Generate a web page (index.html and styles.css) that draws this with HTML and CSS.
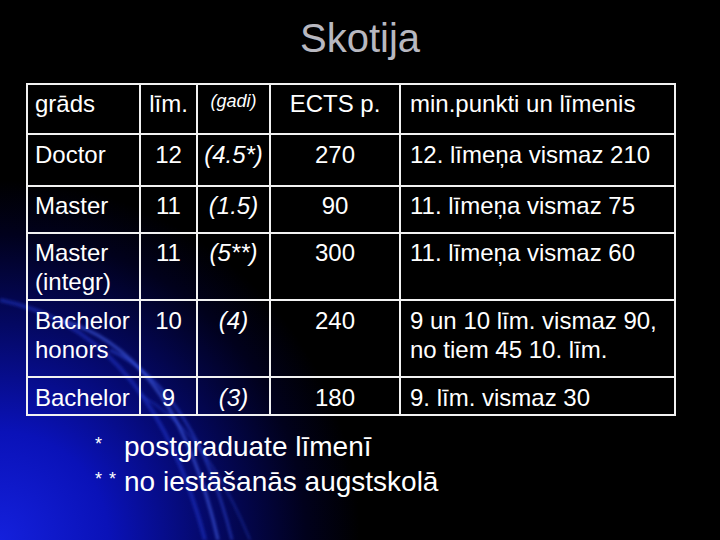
FILE: index.html
```html
<!DOCTYPE html>
<html lang="lv">
<head>
<meta charset="utf-8">
<title>Skotija</title>
<link rel="stylesheet" href="styles.css">
</head>
<body>
<div class="slide">
  <svg class="bg" width="720" height="540" viewBox="0 0 720 540" aria-hidden="true">
    <defs>
      <radialGradient id="glow" cx="0" cy="540" r="360" gradientUnits="userSpaceOnUse">
        <stop offset="0" stop-color="#1420dc"/>
        <stop offset="0.3" stop-color="#0a12b8"/>
        <stop offset="0.6" stop-color="#040862"/>
        <stop offset="0.85" stop-color="#01011c"/>
        <stop offset="1" stop-color="#000000"/>
      </radialGradient>
      <filter id="soft" x="-20%" y="-20%" width="140%" height="140%">
        <feGaussianBlur stdDeviation="1.6"/>
      </filter>
    </defs>
    <rect width="720" height="540" fill="#000"/>
    <rect width="720" height="540" fill="url(#glow)"/>
    <g fill="none" filter="url(#soft)">
      <path d="M 0 300 Q 150 330 205 540" stroke="#2a44ee" stroke-opacity="0.4" stroke-width="4"/>
      <path d="M 60 320 Q 175 350 218 540" stroke="#4a6cff" stroke-opacity="0.55" stroke-width="3"/>
      <path d="M 110 350 Q 195 390 232 540" stroke="#3a5cff" stroke-opacity="0.45" stroke-width="2.5"/>
      <path d="M 140 395 Q 205 430 250 540" stroke="#3350f0" stroke-opacity="0.35" stroke-width="2"/>
    </g>
  </svg>

  <h1 class="title">Skotija</h1>

  <table class="grid">
    <colgroup>
      <col class="c1"><col class="c2"><col class="c3"><col class="c4"><col class="c5">
    </colgroup>
    <tr class="r-head">
      <td>grāds</td>
      <td class="mid">līm.</td>
      <td class="mid"><span class="small">(gadi)</span></td>
      <td class="mid">ECTS p.</td>
      <td>min.punkti un līmenis</td>
    </tr>
    <tr class="r-doc">
      <td>Doctor</td>
      <td class="mid">12</td>
      <td class="mid it">(4.5*)</td>
      <td class="mid">270</td>
      <td>12. līmeņa vismaz 210</td>
    </tr>
    <tr class="r-mas">
      <td>Master</td>
      <td class="mid">11</td>
      <td class="mid it">(1.5)</td>
      <td class="mid">90</td>
      <td>11. līmeņa vismaz 75</td>
    </tr>
    <tr class="r-int">
      <td>Master<br>(integr)</td>
      <td class="mid">11</td>
      <td class="mid it">(5**)</td>
      <td class="mid">300</td>
      <td>11. līmeņa vismaz 60</td>
    </tr>
    <tr class="r-hon">
      <td>Bachelor<br>honors</td>
      <td class="mid">10</td>
      <td class="mid it">(4)</td>
      <td class="mid">240</td>
      <td>9 un 10 līm. vismaz 90,<br>no tiem 45 10. līm.</td>
    </tr>
    <tr class="r-bac">
      <td>Bachelor</td>
      <td class="mid">9</td>
      <td class="mid it">(3)</td>
      <td class="mid">180</td>
      <td>9. līm. vismaz 30</td>
    </tr>
  </table>

  <div class="notes">
    <p class="note"><span class="mark">*</span>postgraduate līmenī</p>
    <p class="note"><span class="mark">* *</span>no iestāšanās augstskolā</p>
  </div>
</div>
</body>
</html>
```

FILE: styles.css
```css
html, body {
  margin: 0;
  padding: 0;
  background: #000;
}

.slide {
  position: relative;
  width: 720px;
  height: 540px;
  overflow: hidden;
  font-family: "Liberation Sans", Arial, sans-serif;
  color: #ffffff;
  padding-top: 14px;
  box-sizing: border-box;
}

.bg {
  position: absolute;
  left: 0;
  top: 0;
  z-index: 0;
}

.title, .grid, .notes {
  position: relative;
  z-index: 1;
}

.title {
  margin: 0 0 21px 0;
  font-weight: normal;
  font-size: 40px;
  line-height: 48px;
  height: 48px;
  text-align: center;
  color: #b8b8c0;
}

.grid {
  margin-left: 26px;
  border-collapse: collapse;
  table-layout: fixed;
  width: 648px;
  font-size: 24px;
  line-height: 29px;
}

.c1 { width: 113px; }
.c2 { width: 57px; }
.c3 { width: 73px; }
.c4 { width: 130px; }
.c5 { width: 275px; }

.grid td {
  border: 2px solid #f2f2f2;
  padding: 4px 4px 0 7px;
  vertical-align: top;
  white-space: nowrap;
}

.grid td:last-child {
  padding-left: 9px;
}

.grid td.mid {
  text-align: center;
  padding-left: 0;
  padding-right: 0;
}

.it {
  font-style: italic;
}

.small {
  font-style: italic;
  font-size: 18px;
  line-height: 22px;
  display: inline-block;
  vertical-align: top;
  padding-top: 1px;
}

.r-head { height: 50px; }
.r-doc  { height: 52px; }
.r-mas  { height: 47px; }
.r-int  { height: 67px; }
.r-hon  { height: 77px; }
.r-bac  { height: 38px; }

.r-doc td, .r-hon td, .r-bac td { padding-top: 5px; }

.notes {
  margin-top: 13px;
  padding-left: 95px;
}

.note {
  margin: 0;
  font-size: 28px;
  line-height: 35px;
  white-space: nowrap;
}

.mark {
  display: inline-block;
  width: 29px;
  font-size: 18px;
  vertical-align: top;
  line-height: 30px;
  word-spacing: 2px;
}
```
